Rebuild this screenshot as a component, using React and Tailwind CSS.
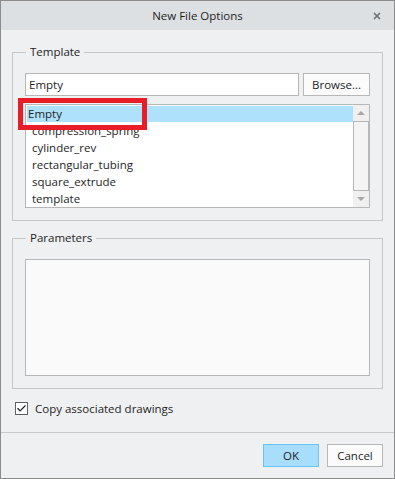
import { Check, X } from 'lucide-react';

const items = ['Empty', 'compression_spring', 'cylinder_rev', 'rectangular_tubing', 'square_extrude', 'template'];

function Group({ label, children, className = '' }) {
  return (
    <fieldset className={`border border-[#c6c7c8] px-[12px] ${className}`}>
      <legend className="ml-[1px] px-[4px] text-[11.5px] leading-4 text-[#1e1e1e]">{label}</legend>
      {children}
    </fieldset>
  );
}

export default function App() {
  return (
    <div
      className="flex h-[479px] w-[395px] flex-col border border-[#8c8c8c] bg-[#eff0f2] text-[11.5px] text-[#1e1e1e]"
      style={{ fontFamily: '"Open Sans", "Noto Sans", sans-serif' }}
    >
      {/* title bar */}
      <div className="relative flex h-[29px] shrink-0 items-center justify-center bg-[#dde0e2]">
        <span>New File Options</span>
        <X size={10} strokeWidth={4} className="absolute right-[12px] top-[10px] text-[#6e6e6e]" />
      </div>

      <div className="flex flex-1 flex-col pl-[11px] pr-[11px]">
        {/* Template */}
        <Group label="Template" className="mt-[14px] pb-[12px] pt-[13px]">
          <div className="flex gap-[4px]">
            <div className="flex h-[23px] w-[274px] items-center border border-[#b7b7b7] bg-white pl-[3px]">
              Empty
            </div>
            <button className="h-[23px] flex-1 border border-[#b7b7b7] bg-[#fbfbfb]">Browse...</button>
          </div>
          <div className="relative mt-[8px] flex h-[104px] border border-[#b7b7b7] bg-white">
            <ul className="flex-1 pt-[1px]">
              {items.map((it, i) => (
                <li
                  key={it}
                  className={
                    i === 0
                      ? 'ml-[1px] flex h-[16px] items-center bg-[#aee1fb] pl-[1px] leading-4'
                      : 'flex h-[17px] items-center pl-[6px] leading-4'
                  }
                >
                  {it}
                </li>
              ))}
            </ul>
            {/* scrollbar */}
            <div className="flex w-[16px] flex-col bg-[#f0f0f0]">
              <div className="flex h-[16px] items-center justify-center">
                <div className="h-0 w-0 border-x-[4px] border-b-[4px] border-x-transparent border-b-[#a6a6a6]" />
              </div>
              <div className="flex-1 border border-[#b7b7b7] bg-[#f4f4f4]" />
              <div className="flex h-[16px] items-center justify-center">
                <div className="h-0 w-0 border-x-[4px] border-t-[4px] border-x-transparent border-t-[#a6a6a6]" />
              </div>
            </div>
            {/* red highlight */}
            <div className="pointer-events-none absolute left-[-8px] top-[-7px] h-[32px] w-[129px] border-[5px] border-[#e71d27]" />
          </div>
        </Group>

        {/* Parameters */}
        <Group label="Parameters" className="mt-[9px] pb-[12px] pt-[13px]">
          <div className="h-[117px] border border-[#b7b7b7] bg-[#fafafa]" />
        </Group>

        {/* checkbox */}
        <label className="mt-[11px] flex items-center gap-[7px] pl-[3px]">
          <span className="flex h-[13px] w-[13px] items-center justify-center border border-[#5f5f5f] bg-white">
            <Check size={11} strokeWidth={2.5} className="text-[#1e1e1e]" />
          </span>
          Copy associated drawings
        </label>
      </div>

      {/* footer */}
      <div className="flex h-[46px] shrink-0 items-start justify-end gap-[8px] border-t border-[#c8c9ca] pr-[11px] pt-[11px]">
        <button className="h-[23px] w-[56px] border border-[#67c5f6] bg-[#a8ddfb]">OK</button>
        <button className="h-[23px] w-[56px] border border-[#b7b7b7] bg-[#fbfbfb]">Cancel</button>
      </div>
    </div>
  );
}
